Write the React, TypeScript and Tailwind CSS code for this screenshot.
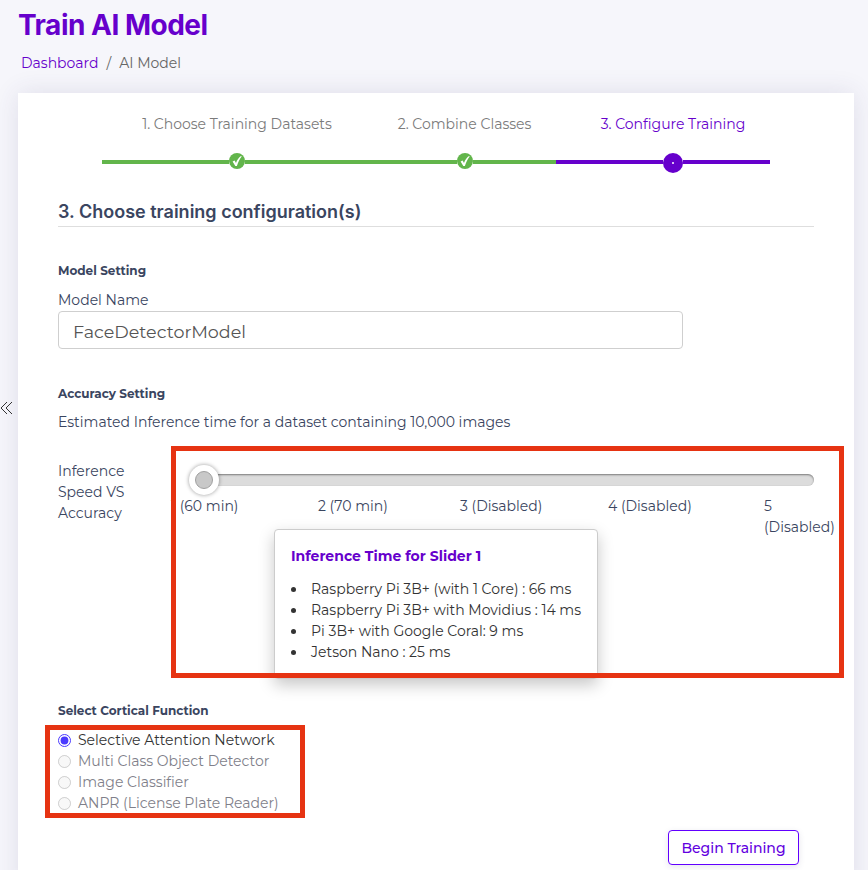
const bodyFont = "font-['Montserrat','Inter','Noto_Sans',sans-serif]";
const headFont = "font-['Inter',sans-serif]";

const radios = [
    { label: "Selective Attention Network", active: true },
    { label: "Multi Class Object Detector", active: false },
    { label: "Image Classifier", active: false },
    { label: "ANPR (License Plate Reader)", active: false },
];

const timings = [
    "Raspberry Pi 3B+ (with 1 Core) : 66 ms",
    "Raspberry Pi 3B+ with Movidius : 14 ms",
    "Pi 3B+ with Google Coral: 9 ms",
    "Jetson Nano : 25 ms",
];

function DoneDot() {
    return (
        <span className="flex h-4 w-4 shrink-0 items-center justify-center rounded-full bg-[#62b54b]">
            <svg viewBox="0 0 16 16" className="h-4 w-4" fill="#fff">
                <path d="M3.6 8.6 5.6 7.6 7 10C8 7 9.8 4.6 12 3l.7.5C10.6 6 9.2 9 7.9 13H6.3z" />
            </svg>
        </span>
    );
}

function Stepper() {
    return (
        <div className="ml-[44px]">
            <div className="grid grid-cols-[270px_185px_232px] text-center text-sm leading-[21px]">
                <span className="text-[#7b7b7b]">1. Choose Training Datasets</span>
                <span className="text-[#7b7b7b]">2. Combine Classes</span>
                <span className="text-[#6600cc]">3. Configure Training</span>
            </div>
            <div className="mt-[18px] flex h-5 items-start">
                <span className="mt-[7px] h-[4px] w-[127px] bg-[#62b54b]" />
                <DoneDot />
                <span className="mt-[7px] h-[4px] w-[212px] bg-[#62b54b]" />
                <DoneDot />
                <span className="mt-[7px] h-[4px] w-[83px] bg-[#62b54b]" />
                <span className="mt-[7px] h-[4px] w-[107px] bg-[#6600cc]" />
                <span className="flex h-5 w-5 items-center justify-center rounded-full bg-[#6600cc]">
                    <span className="h-[2px] w-[2px] rounded-full bg-white" />
                </span>
                <span className="mt-[7px] h-[4px] w-[87px] bg-[#6600cc]" />
            </div>
        </div>
    );
}

function Slider() {
    return (
        <div className="relative ml-[113px] mt-[17px] flex-1">
            <div className="relative pt-[9px]">
                <div className="ml-[34px] mr-[20px] h-3 rounded-full bg-[#dcdcdc] shadow-[inset_0_1px_2px_rgba(0,0,0,0.45)]" />
                <div className="absolute left-[18px] top-0 flex h-[30px] w-[30px] items-center justify-center rounded-full bg-white shadow-[0_0_4px_rgba(0,0,0,0.4)]">
                    <span className="h-[18px] w-[18px] rounded-full border border-[#a0a0a0] bg-[#c8c8c8]" />
                </div>
            </div>
            <div className="mt-[10px] grid grid-cols-[147px_142px_148px_156px_70px] text-sm leading-[21px]">
                <span>1 (60 min)</span>
                <span>2 (70 min)</span>
                <span>3 (Disabled)</span>
                <span>4 (Disabled)</span>
                <span>5 (Disabled)</span>
            </div>
        </div>
    );
}

export default function App() {
    return (
        <div className={`relative h-[870px] w-[868px] overflow-hidden bg-[#f6f6fb] text-[#3a4560] ${bodyFont}`}>
            <div className="pl-[18px] pt-[8px]">
                <h1 className={`${headFont} text-[28px] font-bold leading-[34px] tracking-[-0.5px] text-[#6600cc]`}>
                    Train AI Model
                </h1>
                <div className="ml-[3px] mt-[11px] flex gap-[8px] text-sm leading-[21px] text-[#666]">
                    <span className="text-[#6600cc]">Dashboard</span>
                    <span>/</span>
                    <span>AI Model</span>
                </div>
            </div>

            <svg viewBox="0 0 12 14" className="absolute left-0 top-[401px] h-[14px] w-[12px]" fill="none" stroke="#333" strokeWidth="1">
                <path d="M7 1 1 7l6 6M12 1 6 7l6 6" />
            </svg>

            <div className="ml-[18px] mt-[19px] h-[800px] w-[836px] bg-white px-[40px] pt-[21px] shadow-[0_0_24px_rgba(60,50,110,0.12)]">
                <Stepper />

                <h2 className={`${headFont} mt-[25px] border-b border-[#dedede] pb-[1px] text-lg font-semibold leading-[27px] text-[#3a4560]`}>
                    3. Choose training configuration(s)
                </h2>

                <h3 className="mt-[35px] text-xs font-bold leading-[18px]">Model Setting</h3>
                <label className="mt-[10px] block text-sm leading-[21px]">Model Name</label>
                <input
                    readOnly
                    value="FaceDetectorModel"
                    className="block h-[38px] w-[625px] rounded border border-[#cfcfcf] px-[14px] pt-[2px] text-[17.5px] text-[#555] outline-none"
                />

                <h3 className="mt-[36px] text-xs font-bold leading-[18px]">Accuracy Setting</h3>
                <p className="mt-[9px] text-sm leading-[21px]">
                    Estimated Inference time for a dataset containing 10,000 images
                </p>

                <div className="mt-[15px] flex">
                    <div className="mt-[13px] w-[0px] shrink-0 text-sm leading-[21px]">
                        <div className="w-[80px]">Inference Speed VS Accuracy</div>
                    </div>
                    <Slider />
                </div>

                <h3 className="mt-[164px] text-xs font-bold leading-[18px]">Select Cortical Function</h3>
                <div className="mt-[9px] flex flex-col">
                    {radios.map((radio) => (
                        <label
                            key={radio.label}
                            className={`flex h-[21px] items-center gap-[7px] text-sm ${radio.active ? "text-[#333]" : "text-[#7f7f8a]"}`}
                        >
                            <input
                                type="radio"
                                name="cortical"
                                readOnly
                                checked={radio.active}
                                disabled={!radio.active}
                                className="m-0 mt-[2px] h-[13px] w-[13px] accent-[#4a3aff]"
                            />
                            {radio.label}
                        </label>
                    ))}
                </div>

                <div className="mt-[17px] flex justify-end pr-[15px]">
                    <button className="h-[35px] w-[131px] rounded border-[1.5px] border-[#6200ff] text-sm font-medium text-[#6200e0] shadow-[0_2px_6px_rgba(60,50,110,0.12)]">
                        Begin Training
                    </button>
                </div>
            </div>

            <div className="absolute left-[274px] top-[529px] w-[324px] rounded border border-[#ccc] bg-white pl-[16px] pt-[16px] shadow-[0_6px_16px_rgba(0,0,0,0.22)]">
                <h4 className="text-sm font-bold leading-[21px] text-[#6600cc]">Inference Time for Slider 1</h4>
                <ul className="mb-[15px] mt-[12px] whitespace-nowrap text-sm leading-[21px] text-[#333]">
                    {timings.map((t) => (
                        <li key={t} className="flex items-center gap-[15px]">
                            <span className="h-[5px] w-[5px] rounded-full bg-[#333]" />
                            {t}
                        </li>
                    ))}
                </ul>
            </div>

            <div className="absolute left-[171px] top-[446px] h-[232px] w-[673px] border-[5px] border-[#e63312]" />
            <div className="absolute left-[45px] top-[725px] h-[93px] w-[260px] border-[5px] border-[#e63312]" />
        </div>
    );
}
